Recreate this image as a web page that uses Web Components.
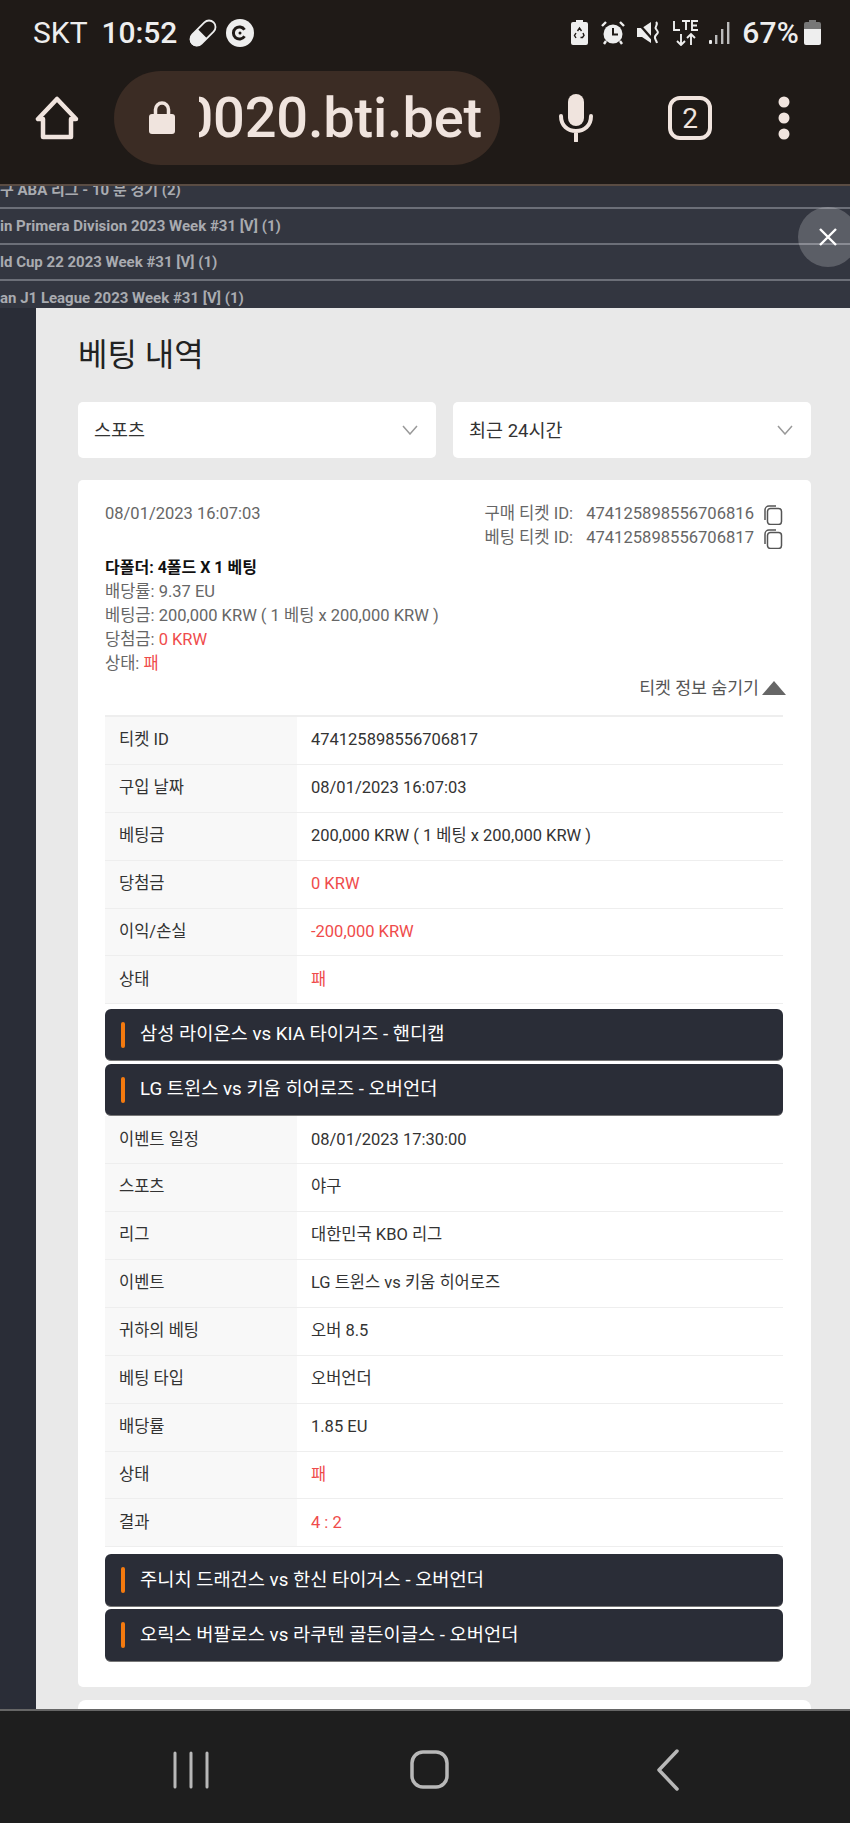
<!DOCTYPE html>
<html lang="ko"><head><meta charset="utf-8"><title>베팅 내역</title>
<style>
html,body{margin:0;padding:0;background:#1f1a17}
body{width:850px;height:1823px;overflow:hidden;font-family:Roboto,"Noto Sans CJK KR",sans-serif}
</style></head><body>
<app-shell>
  <status-bar slot="top"></status-bar>
  <browser-bar slot="top"></browser-bar>
  <back-list slot="view">
    <list-row>구 ABA 리그 - 10 분 경기 (2)</list-row>
    <list-row>in Primera Division 2023 Week #31 [V] (1)</list-row>
    <list-row>ld Cup 22 2023 Week #31 [V] (1)</list-row>
    <list-row>an J1 League 2023 Week #31 [V] (1)</list-row>
  </back-list>
  <close-button slot="view"></close-button>
  <bet-modal slot="view">
    <bet-ticket>
      <info-row>티켓 ID<span slot="v">474125898556706817</span></info-row>
      <info-row>구입 날짜<span slot="v">08/01/2023 16:07:03</span></info-row>
      <info-row>베팅금<span slot="v">200,000 KRW ( 1 베팅 x 200,000 KRW )</span></info-row>
      <info-row loss>당첨금<span slot="v">0 KRW</span></info-row>
      <info-row loss>이익/손실<span slot="v">-200,000 KRW</span></info-row>
      <info-row loss>상태<span slot="v">패</span></info-row>
      <event-head style="--gap:5px">삼성 라이온스 vs KIA 타이거즈 - 핸디캡</event-head>
      <event-head style="--gap:3px">LG 트윈스 vs 키움 히어로즈 - 오버언더</event-head>
      <info-row>이벤트 일정<span slot="v">08/01/2023 17:30:00</span></info-row>
      <info-row>스포츠<span slot="v">야구</span></info-row>
      <info-row>리그<span slot="v">대한민국 KBO 리그</span></info-row>
      <info-row>이벤트<span slot="v">LG 트윈스 vs 키움 히어로즈</span></info-row>
      <info-row>귀하의 베팅<span slot="v">오버 8.5</span></info-row>
      <info-row>베팅 타입<span slot="v">오버언더</span></info-row>
      <info-row>배당률<span slot="v">1.85 EU</span></info-row>
      <info-row loss>상태<span slot="v">패</span></info-row>
      <info-row loss>결과<span slot="v">4 : 2</span></info-row>
      <event-head style="--gap:7px;--h:53px">주니치 드래건스 vs 한신 타이거스 - 오버언더</event-head>
      <event-head style="--gap:2px;--h:53px">오릭스 버팔로스 vs 라쿠텐 골든이글스 - 오버언더</event-head>
    </bet-ticket>
  </bet-modal>
  <nav-bar slot="bottom"></nav-bar>
</app-shell>
<script>
function def(name,html){
  customElements.define(name,class extends HTMLElement{
    constructor(){super();this.attachShadow({mode:'open'}).innerHTML=html;}
  });
}
def('app-shell',`<style>
:host{display:flex;flex-direction:column;width:850px;height:1823px}
.view{position:relative;height:1523px;overflow:hidden;background:#2a2d37}
</style><slot name="top"></slot><div class="view"><slot name="view"></slot></div><slot name="bottom"></slot>`);

def('status-bar',`<style>
:host{display:flex;align-items:center;height:65px;background:#1f1a17;color:#eee;font:400 30px/1 Roboto,sans-serif;padding:0 29px 0 33px;box-sizing:border-box}
.t{font-weight:500;margin-left:14px;letter-spacing:-.1px}
svg{display:block;flex:none}
.sp{flex:1}
</style>
<span>SKT</span><span class="t">10:52</span>
<svg style="margin-left:12px" width="28" height="28" viewBox="0 0 28 28"><g transform="rotate(-45 14 14)"><rect x="-1" y="7.500" width="30" height="13" rx="6.500" fill="none" stroke="#eee" stroke-width="1.800"/><path d="M14 7.500H5.500a6.500 6.500 0 0 0 0 13H14Z" fill="#eee" transform="translate(-1 0)"/></g></svg>
<svg style="margin-left:9px" width="28" height="28" viewBox="0 0 28 28"><circle cx="14" cy="14" r="14" fill="#eee"/><path d="M18.500 10.800A6 6 0 1 0 18.500 17.200" fill="none" stroke="#1f1a17" stroke-width="3"/><circle cx="14" cy="14" r="1.500" fill="#1f1a17"/></svg>
<span class="sp"></span>
<svg width="17" height="25" viewBox="0 0 17 25"><path d="M5 0h7v2h3a2 2 0 0 1 2 2v19a2 2 0 0 1-2 2H2a2 2 0 0 1-2-2V4a2 2 0 0 1 2-2h3Z" fill="#eee"/><path d="M6.500 11 8.500 8l2 3M12 13l1 2.500-1.500 2H9.500M5 18l-1.500-2.500L5 13" fill="none" stroke="#1f1a17" stroke-width="1.400"/></svg>
<svg style="margin-left:13px" width="24" height="24" viewBox="0 0 24 24"><circle cx="12" cy="13" r="9.500" fill="#eee"/><path d="M12 7v6.500h5" fill="none" stroke="#1f1a17" stroke-width="2"/><path d="M1 5 5 1M23 5l-4-4M5 20l-2 3M19 20l2 3" stroke="#eee" stroke-width="2.400"/></svg>
<svg style="margin-left:12px" width="23" height="24" viewBox="0 0 23 24"><path d="M0 7h5l9-6v21l-9-6H0Z" fill="#eee"/><path d="M1 2 17 20" stroke="#1f1a17" stroke-width="2.400"/><path d="M19 1c3 3-2 4 0 7s3 3 0 6 0 4 1 8" fill="none" stroke="#eee" stroke-width="2"/></svg>
<svg style="margin-left:13px" width="26" height="26" viewBox="0 0 26 26"><path d="M1 1v9h6M9 1h8M13 1v9M25 1h-6v9h6M19 5.500h5" fill="none" stroke="#eee" stroke-width="1.900"/><path d="M8 14v11M4 21l4 4 4-4M18 25V14M14 18l4-4 4 4" fill="none" stroke="#eee" stroke-width="1.900"/></svg>
<svg style="margin-left:10px" width="21" height="24" viewBox="0 0 21 24"><rect x="0" y="19" width="3" height="4" rx="1" fill="#eee"/><rect x="6" y="14" width="2.400" height="9" fill="#bbb"/><rect x="12" y="8" width="2.400" height="15" fill="#bbb"/><rect x="18" y="1" width="2.400" height="22" fill="#bbb"/></svg>
<span style="margin-left:12px;font-weight:500;letter-spacing:.2px">67%</span>
<svg style="margin-left:5px" width="17" height="25" viewBox="0 0 17 25"><path d="M5 0h7v2h3a2 2 0 0 1 2 2v5H0V4a2 2 0 0 1 2-2h3Z" fill="#777"/><path d="M0 9h17v14a2 2 0 0 1-2 2H2a2 2 0 0 1-2-2Z" fill="#eee"/></svg>`);

def('browser-bar',`<style>
:host{display:flex;align-items:center;height:121px;box-sizing:border-box;background:#1f1a17;border-bottom:2px solid #5a4c43;padding:0 0 13px 35px}
svg{display:block;flex:none}
.pill{margin-left:35px;width:386px;height:94px;border-radius:47px;background:#3b2c24;display:flex;align-items:center;box-sizing:border-box;padding-left:35px}
.url{margin-left:24px;width:283px;overflow:hidden;display:flex;justify-content:flex-end;font:500 56px/70px Roboto,sans-serif;color:#f0e4de;letter-spacing:-.2px}
</style>
<svg width="44" height="44" viewBox="0 0 44 44"><path d="M22 3 3 23h5v18h28V23h5Z" fill="none" stroke="#f0e4de" stroke-width="4.500" stroke-linejoin="round"/></svg>
<div class="pill">
<svg width="26" height="34" viewBox="0 0 26 34"><path d="M6.500 14V8.500a6.500 6.500 0 0 1 13 0V14" fill="none" stroke="#f0e4de" stroke-width="3.500"/><rect y="13" width="26" height="20" rx="3" fill="#f0e4de"/></svg>
<div class="url"><span>0020.bti.bet</span></div>
</div>
<svg style="margin-left:59px" width="34" height="48" viewBox="0 0 34 48"><rect x="9" y="0" width="16" height="32" rx="8" fill="#f0e4de"/><path d="M2 22c0 10 7 15 15 15s15-5 15-15M17 37v10" fill="none" stroke="#f0e4de" stroke-width="4" stroke-linecap="round"/></svg>
<svg style="margin-left:75px" width="44" height="44" viewBox="0 0 44 44"><rect x="2" y="2" width="40" height="40" rx="10" fill="none" stroke="#f0e4de" stroke-width="4"/><text x="22" y="32" text-anchor="middle" font-family="Roboto" font-size="28" fill="#f0e4de">2</text></svg>
<svg style="margin-left:66px" width="12" height="44" viewBox="0 0 12 44"><circle cx="6" cy="6" r="5.500" fill="#f0e4de"/><circle cx="6" cy="22" r="5.500" fill="#f0e4de"/><circle cx="6" cy="38" r="5.500" fill="#f0e4de"/></svg>`);

def('back-list',`<style>
:host{display:block;background:#333640;margin-top:-13px;height:135px;overflow:hidden}
</style><slot></slot>`);
def('list-row',`<style>
:host{display:flex;align-items:center;height:36px;box-sizing:border-box;border-bottom:2px solid #6c6f78;color:#a9abb0;font:700 15px/20px Roboto,"Noto Sans CJK KR",sans-serif;white-space:nowrap}
</style><slot></slot>`);
def('close-button',`<style>
:host{display:block;position:absolute;left:798px;top:21px;width:60px;height:60px;border-radius:50%;background:rgba(255,255,255,.2);z-index:2}
svg{position:absolute;left:21px;top:21px}
</style><svg width="18" height="18" viewBox="0 0 18 18"><path d="M1 1 17 17M17 1 1 17" stroke="#fff" stroke-width="2.400"/></svg>`);

def('bet-modal',`<style>
:host{display:block;position:absolute;left:36px;right:0;top:122px;bottom:0;background:#e9e9e9;color:#222;overflow:hidden;padding:32px 39px 0 42px;box-sizing:border-box;font-family:Roboto,"Noto Sans CJK KR",sans-serif}
h1{margin:0 0 32px;font:400 32px/30px Roboto,"Noto Sans CJK KR",sans-serif;color:#222}
.sel{display:grid;grid-template-columns:358px 358px;gap:17px;margin-bottom:22px}
.next{height:40px;background:#fff;border-radius:8px;margin-top:13px}
</style><h1>베팅 내역</h1>
<div class="sel"><bet-select>스포츠</bet-select><bet-select>최근 24시간</bet-select></div>
<slot></slot><div class="next"></div>`);
def('bet-select',`<style>
:host{display:flex;align-items:center;justify-content:space-between;height:56px;box-sizing:border-box;background:#fff;border-radius:5px;padding:0 18px 2px 16px;font-size:18.500px;color:#333}
svg{margin-top:2px}
</style><slot></slot><svg width="16" height="10" viewBox="0 0 16 10"><path d="M1 1 8 9 15 1" fill="none" stroke="#999" stroke-width="1.500"/></svg>`);

const copy=`<svg width="20" height="20" viewBox="0 0 20 20"><path d="M2 15V5a4 4 0 0 1 4-4h7" fill="none" stroke="#555" stroke-width="1.500"/><rect x="4.500" y="3.500" width="14" height="16" rx="3" fill="#fff" stroke="#555" stroke-width="1.500"/></svg>`;
def('bet-ticket',`<style>
:host{display:block;background:#fff;border-radius:5px;padding:22px 28px 25px 27px;font:400 16.500px/24px Roboto,"Noto Sans CJK KR",sans-serif;color:#666}
.top{display:flex;justify-content:space-between;margin-bottom:6px}
.ids{display:grid;grid-template-columns:auto auto 20px;column-gap:13px;font-size:16.600px}
.ids svg{margin-top:3px;margin-left:-4px;transform:translateX(4px)}
.ids span:nth-child(3n+2){margin-right:-4px}
b{display:block;color:#111;font-weight:700;font-size:16px}
.red{color:#ef4b4b}
.tog{display:flex;justify-content:flex-end;align-items:center;gap:3px;height:24px;margin-right:-3px;margin-bottom:15px;color:#555;font-size:17.300px}
.tri{width:0;height:0;border:12px solid transparent;border-top:0;border-bottom:14px solid #666}
.tb{border-top:2px solid #eee}
</style>
<div class="top"><div>08/01/2023 16:07:03</div>
<div class="ids"><span>구매 티켓 ID:</span><span>474125898556706816</span>${copy}<span>베팅 티켓 ID:</span><span>474125898556706817</span>${copy}</div></div>
<b>다폴더: 4폴드 X 1 베팅</b>
<div>배당률: 9.37 EU</div>
<div>베팅금: 200,000 KRW ( 1 베팅 x 200,000 KRW )</div>
<div>당첨금: <span class="red">0 KRW</span></div>
<div>상태: <span class="red">패</span></div>
<div class="tog"><span>티켓 정보 숨기기</span><span class="tri"></span></div>
<div class="tb"><slot></slot></div>`);
def('info-row',`<style>
:host{display:grid;grid-template-columns:192px 1fr;height:47.900px;box-sizing:border-box;border-bottom:1.500px solid #eee;font:400 16.500px/1 Roboto,"Noto Sans CJK KR",sans-serif;color:#333}
.k{background:#f8f8f8;padding-left:14px;display:flex;align-items:center}
.v{padding-left:14px;display:flex;align-items:center;color:#333}
:host([loss]) .v{color:#ef4b4b}
</style><div class="k"><slot></slot></div><div class="v"><slot name="v"></slot></div>`);
def('event-head',`<style>
:host{display:flex;align-items:center;height:var(--h,52px);box-sizing:border-box;margin-top:var(--gap,3px);background:#2a2d37;border-radius:6px;color:#fff;font:400 18.700px/1 Roboto,"Noto Sans CJK KR",sans-serif;padding-left:16px;border-bottom:1px solid #777}
i{display:block;width:4px;height:26px;border-radius:2px;background:#f47a0f;margin-right:15px}
</style><i></i><slot></slot>`);
def('nav-bar',`<style>
:host{display:block;height:114px;background:#1e1e1e;border-top:2px solid #666;box-sizing:border-box}
svg{display:block}
</style><svg width="850" height="112" viewBox="0 0 850 112" fill="none" stroke="#b8b8b8" stroke-linecap="round"><path d="M175 42V76M191 42V76M207 42V76" stroke-width="3"/><rect x="412" y="41" width="35" height="35" rx="11" stroke-width="3.500"/><path d="M677 40 659 59 677 78" stroke-width="3.500" stroke-linejoin="round"/></svg>`);
</script></body></html>
